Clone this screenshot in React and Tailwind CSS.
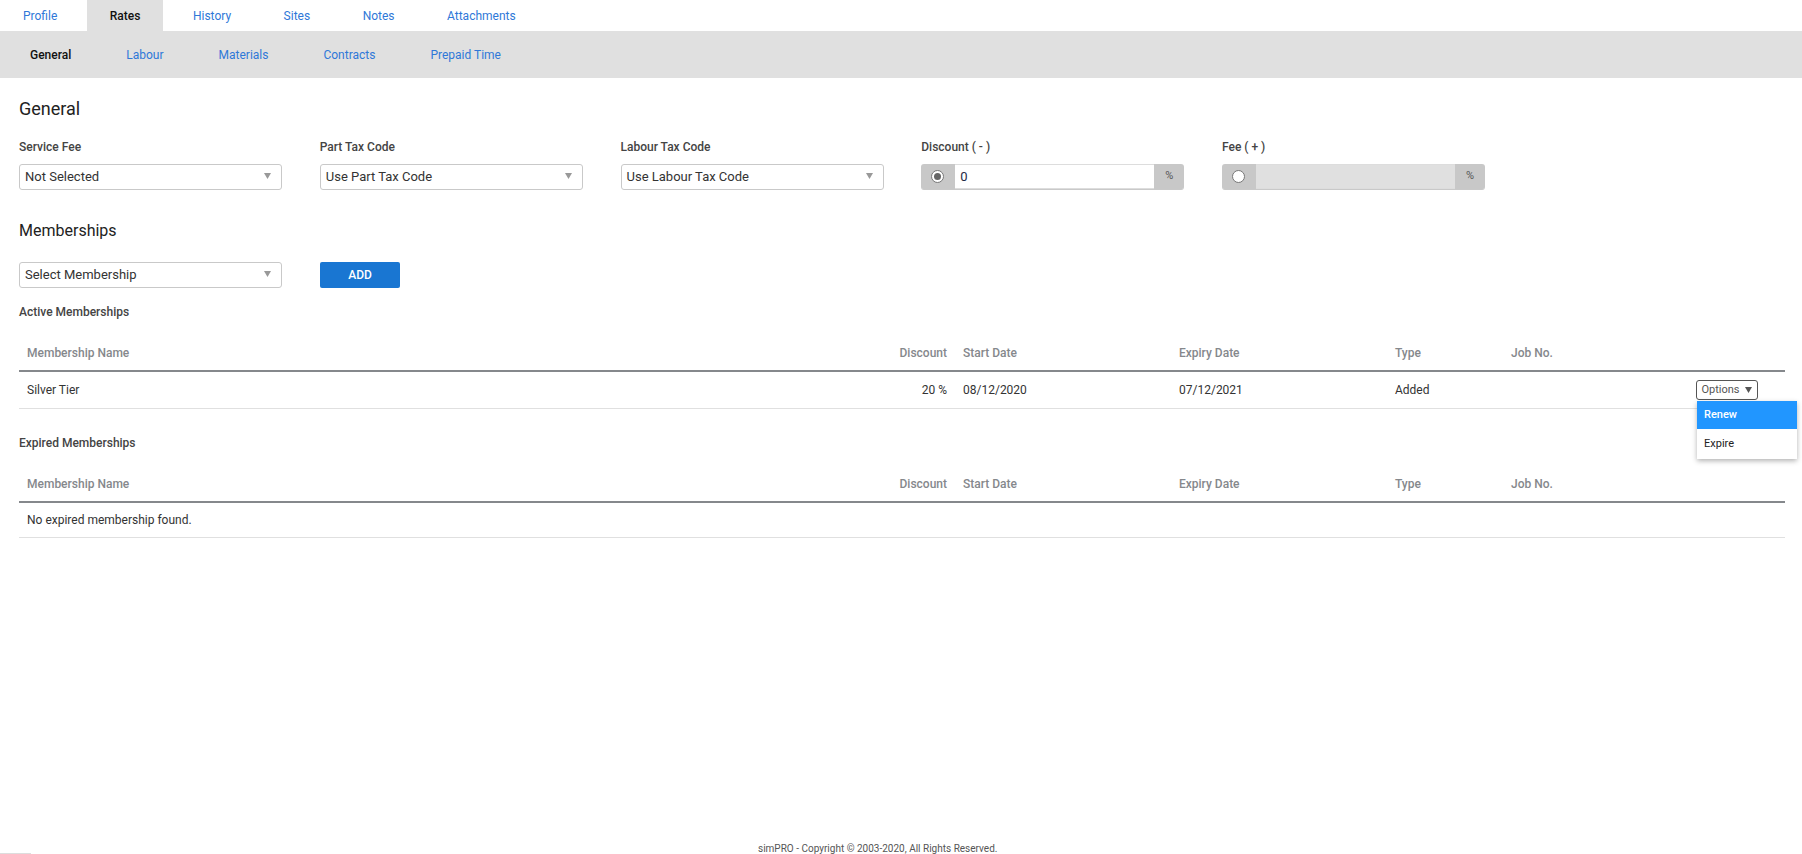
const TABS = ['Profile', 'Rates', 'History', 'Sites', 'Notes', 'Attachments'];
const SUB_TABS = ['General', 'Labour', 'Materials', 'Contracts', 'Prepaid Time'];
const COLS = 'grid grid-cols-[836px_100px_216px_216px_116px_1fr]';

const Arrow = () => (
  <svg width="7" height="6" viewBox="0 0 7 6" className="shrink-0">
    <path d="M0 0h7L3.5 6z" fill="#999999" />
  </svg>
);

const Select = ({ text }) => (
  <div className="flex h-[26px] w-[263px] items-center justify-between rounded-[3px] border border-[#c9c9c9] bg-white pl-[5px] pr-[10px] text-[13px] text-[#333333]">
    <span>{text}</span>
    <span className="-mt-[3px]">
      <Arrow />
    </span>
  </div>
);

const Field = ({ label, children }) => (
  <div className="w-[263px]">
    <div className="mb-[10px] h-[14px] text-[12px] leading-[14px] font-medium text-[#444444]">{label}</div>
    {children}
  </div>
);

const Radio = ({ checked }) => (
  <div className="flex w-[34px] shrink-0 items-center justify-center bg-[#c8c8c8] pr-px">
    <span className="flex h-[13px] w-[13px] items-center justify-center rounded-full border border-[#777777] bg-white">
      {checked && <span className="h-[7px] w-[7px] rounded-full bg-[#666666]" />}
    </span>
  </div>
);

const RateInput = ({ checked, value }) => (
  <div className="flex h-[26px] w-[263px] overflow-hidden rounded-[3px] border-b border-[#c9c9c9] text-[13px]">
    <Radio checked={checked} />
    <div className={`flex flex-1 items-center border-y border-[#dddddd] pl-[5px] text-[#1f2a44] ${checked ? 'bg-white' : 'bg-[#e0e0e0]'}`}>
      {value}
    </div>
    <div className="flex w-[30px] shrink-0 items-center justify-center bg-[#c8c8c8] text-[11px] text-[#555555]">%</div>
  </div>
);

const TableHead = () => (
  <div className={`${COLS} mt-4 h-[35px] items-center border-b-2 border-[#85888c] text-[12px] font-medium text-[#85888c] box-content`}>
    <div className="pl-2">Membership Name</div>
    <div className="pr-2 text-right">Discount</div>
    <div className="pl-2">Start Date</div>
    <div className="pl-2">Expiry Date</div>
    <div className="pl-2">Type</div>
    <div className="pl-2">Job No.</div>
  </div>
);

export default function App() {
  return (
    <div className="flex h-screen flex-col overflow-hidden bg-white text-[#333333]" style={{ fontFamily: 'Roboto, sans-serif' }}>
      {/* Top tabs */}
      <div className="flex h-[31px] gap-[6.5px] text-[12px]">
        {TABS.map((tab) => (
          <div
            key={tab}
            className={`flex items-center px-[23px] ${tab === 'Rates' ? 'bg-[#e0e0e0] font-medium text-[#111111]' : 'text-[#2f78d8]'}`}
          >
            {tab}
          </div>
        ))}
      </div>

      {/* Sub tabs */}
      <div className="flex h-[47px] shrink-0 items-center gap-[55px] bg-[#e0e0e0] pl-[30px] text-[12px]">
        {SUB_TABS.map((tab) => (
          <div key={tab} className={tab === 'General' ? 'font-medium text-[#111111]' : 'text-[#2f78d8]'}>
            {tab}
          </div>
        ))}
      </div>

      <div className="pl-[19px] pr-[17.5px]">
        <h2 className="mt-5 h-[22px] text-[18px] leading-[22px] text-[#222222]">General</h2>

        <div className="mt-5 flex gap-[37.75px]">
          <Field label="Service Fee"><Select text="Not Selected" /></Field>
          <Field label="Part Tax Code"><Select text="Use Part Tax Code" /></Field>
          <Field label="Labour Tax Code"><Select text="Use Labour Tax Code" /></Field>
          <Field label="Discount ( - )"><RateInput checked value="0" /></Field>
          <Field label="Fee ( + )"><RateInput /></Field>
        </div>

        <h3 className="mt-[31px] h-5 text-[16px] leading-5 text-[#222222]">Memberships</h3>

        <div className="mt-[21px] flex gap-[38px]">
          <Select text="Select Membership" />
          <button className="h-[26px] w-20 rounded-[2px] bg-[#1976d2] text-[12px] font-medium text-white">ADD</button>
        </div>

        <div className="mt-[17px] h-[14px] text-[12px] leading-[14px] font-medium text-[#444444]">Active Memberships</div>
        <TableHead />
        <div className={`${COLS} relative h-[37px] items-center border-b border-[#e0e0e0] text-[12px]`}>
          <div className="pl-2">Silver Tier</div>
          <div className="pr-2 text-right">20 %</div>
          <div className="pl-2">08/12/2020</div>
          <div className="pl-2">07/12/2021</div>
          <div className="pl-2">Added</div>
          <div className="relative pl-[192.5px]">
            <button className="flex h-5 w-[62px] items-center justify-center gap-[5px] rounded-[3px] border border-[#555555] text-[11px] text-[#555555]">
              Options
              <svg width="7" height="6" viewBox="0 0 7 6"><path d="M0 0h7L3.5 6z" fill="#555555" /></svg>
            </button>
            {/* Options menu */}
            <div className="absolute left-[194px] top-[21px] z-10 w-[100px] bg-white text-[11px] shadow-[0_2px_5px_rgba(0,0,0,0.3)]">
              <div className="flex h-[28px] items-center bg-[#2196ff] pl-[7px] font-medium text-white">Renew</div>
              <div className="flex h-[30px] items-center pl-[7px] text-[#222222]">Expire</div>
            </div>
          </div>
        </div>

        <div className="mt-[27px] h-[14px] text-[12px] leading-[14px] font-medium text-[#444444]">Expired Memberships</div>
        <TableHead />
        <div className="flex h-[35px] items-center border-b border-[#e0e0e0] pl-2 text-[12px]">No expired membership found.</div>
      </div>

      {/* Footer */}
      <div className="mt-auto flex h-[10px] shrink-0 items-end">
        <div className="h-px w-[31px] bg-[#dddddd]" />
        <div className="ml-[727px] text-[10px] leading-[10px] text-[#555555]">
          simPRO - Copyright © 2003-2020, All Rights Reserved.
        </div>
      </div>
    </div>
  );
}
